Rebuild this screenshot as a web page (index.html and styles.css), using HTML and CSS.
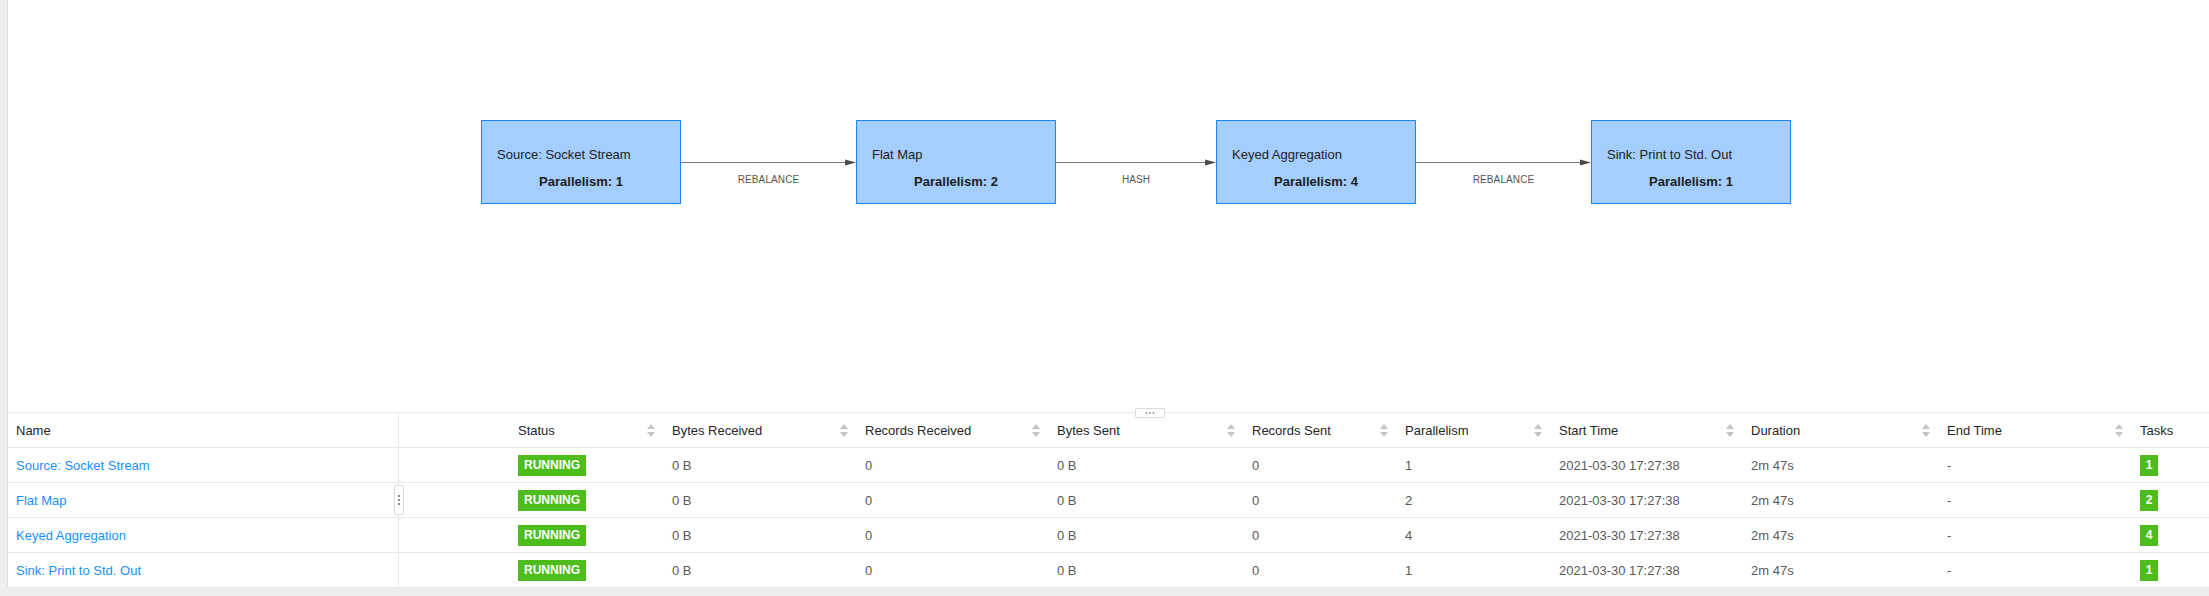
FILE: index.html
```html
<!DOCTYPE html>
<html lang="en">
<head>
<meta charset="utf-8">
<title>Job Overview</title>
<link rel="stylesheet" href="styles.css">
</head>
<body>
<div class="page">
  <div class="panel">
    <div class="graph">
      <svg class="dag" width="2201" height="412" viewBox="0 0 2201 412" xmlns="http://www.w3.org/2000/svg">
        <g class="edge">
          <line x1="673" y1="162.5" x2="838" y2="162.5"/>
          <polygon points="837,159.5 848,162.5 837,165.5"/>
          <text x="760.5" y="182.5" text-anchor="middle">REBALANCE</text>
        </g>
        <g class="edge">
          <line x1="1048" y1="162.5" x2="1198" y2="162.5"/>
          <polygon points="1197,159.5 1208,162.5 1197,165.5"/>
          <text x="1128" y="182.5" text-anchor="middle">HASH</text>
        </g>
        <g class="edge">
          <line x1="1408" y1="162.5" x2="1573" y2="162.5"/>
          <polygon points="1572,159.5 1583,162.5 1572,165.5"/>
          <text x="1495.5" y="182.5" text-anchor="middle">REBALANCE</text>
        </g>
        <g class="node">
          <rect x="473.5" y="120.5" width="199" height="83"/>
          <text class="node-name" x="489" y="159">Source: Socket Stream</text>
          <text class="node-par" x="573" y="185.5" text-anchor="middle">Parallelism: 1</text>
        </g>
        <g class="node">
          <rect x="848.5" y="120.5" width="199" height="83"/>
          <text class="node-name" x="864" y="159">Flat Map</text>
          <text class="node-par" x="948" y="185.5" text-anchor="middle">Parallelism: 2</text>
        </g>
        <g class="node">
          <rect x="1208.5" y="120.5" width="199" height="83"/>
          <text class="node-name" x="1224" y="159">Keyed Aggregation</text>
          <text class="node-par" x="1308" y="185.5" text-anchor="middle">Parallelism: 4</text>
        </g>
        <g class="node">
          <rect x="1583.5" y="120.5" width="199" height="83"/>
          <text class="node-name" x="1599" y="159">Sink: Print to Std. Out</text>
          <text class="node-par" x="1683" y="185.5" text-anchor="middle">Parallelism: 1</text>
        </g>
      </svg>
      <div class="h-handle">
        <svg width="28" height="8" viewBox="0 0 28 8"><circle cx="10.5" cy="4" r="0.85"/><circle cx="14" cy="4" r="0.85"/><circle cx="17.5" cy="4" r="0.85"/></svg>
      </div>
    </div>

    <table class="vertices">
      <thead>
        <tr>
          <th class="c-name">Name</th>
          <th class="c-status"><div class="th-in"><span>Status</span><i class="sorter"></i></div></th>
          <th class="c-br"><div class="th-in"><span>Bytes Received</span><i class="sorter"></i></div></th>
          <th class="c-rr"><div class="th-in"><span>Records Received</span><i class="sorter"></i></div></th>
          <th class="c-bs"><div class="th-in"><span>Bytes Sent</span><i class="sorter"></i></div></th>
          <th class="c-rs"><div class="th-in"><span>Records Sent</span><i class="sorter"></i></div></th>
          <th class="c-par"><div class="th-in"><span>Parallelism</span><i class="sorter"></i></div></th>
          <th class="c-st"><div class="th-in"><span>Start Time</span><i class="sorter"></i></div></th>
          <th class="c-dur"><div class="th-in"><span>Duration</span><i class="sorter"></i></div></th>
          <th class="c-et"><div class="th-in"><span>End Time</span><i class="sorter"></i></div></th>
          <th class="c-tasks">Tasks</th>
        </tr>
      </thead>
      <tbody>
        <tr>
          <td class="c-name"><a class="link">Source: Socket Stream</a></td>
          <td class="c-status"><span class="badge">RUNNING</span></td>
          <td>0 B</td><td>0</td><td>0 B</td><td>0</td><td>1</td>
          <td>2021-03-30 17:27:38</td><td>2m 47s</td><td>-</td>
          <td><span class="task">1</span></td>
        </tr>
        <tr>
          <td class="c-name"><a class="link">Flat Map</a></td>
          <td class="c-status"><span class="badge">RUNNING</span></td>
          <td>0 B</td><td>0</td><td>0 B</td><td>0</td><td>2</td>
          <td>2021-03-30 17:27:38</td><td>2m 47s</td><td>-</td>
          <td><span class="task">2</span></td>
        </tr>
        <tr>
          <td class="c-name"><a class="link">Keyed Aggregation</a></td>
          <td class="c-status"><span class="badge">RUNNING</span></td>
          <td>0 B</td><td>0</td><td>0 B</td><td>0</td><td>4</td>
          <td>2021-03-30 17:27:38</td><td>2m 47s</td><td>-</td>
          <td><span class="task">4</span></td>
        </tr>
        <tr>
          <td class="c-name"><a class="link">Sink: Print to Std. Out</a></td>
          <td class="c-status"><span class="badge">RUNNING</span></td>
          <td>0 B</td><td>0</td><td>0 B</td><td>0</td><td>1</td>
          <td>2021-03-30 17:27:38</td><td>2m 47s</td><td>-</td>
          <td><span class="task">1</span></td>
        </tr>
      </tbody>
    </table>

    <div class="v-handle">
      <svg width="8" height="28" viewBox="0 0 8 28"><circle cx="4" cy="10" r="0.9"/><circle cx="4" cy="14" r="0.9"/><circle cx="4" cy="18" r="0.9"/></svg>
    </div>
  </div>
</div>
</body>
</html>
```
FILE: styles.css
```css
html, body {
  margin: 0;
  padding: 0;
}
body {
  background: #eeeeee;
  font-family: "Liberation Sans", Arial, sans-serif;
  width: 2209px;
  height: 596px;
  overflow: hidden;
}
.page {
  display: flex;
  padding-left: 7px;
}
.panel {
  position: relative;
  flex: 1;
  background: #ffffff;
  border-left: 1px solid #e2e2e2;
}
.graph {
  position: relative;
  height: 412px;
  border-bottom: 1px solid #e8e8e8;
}
.dag {
  display: block;
}
.dag .node rect {
  fill: #a4cefd;
  stroke: #2182ff;
  stroke-width: 1;
}
.dag text {
  font-family: "Liberation Sans", Arial, sans-serif;
}
.dag .node-name {
  font-size: 13px;
  fill: #1f2124;
}
.dag .node-par {
  font-size: 13px;
  font-weight: bold;
  fill: #1b1d20;
}
.dag .edge line {
  stroke: #7a7a7a;
  stroke-width: 1;
}
.dag .edge polygon {
  fill: #4a4a4a;
}
.dag .edge text {
  font-size: 10px;
  fill: #555555;
  letter-spacing: 0.1px;
}
.h-handle {
  position: absolute;
  left: 1127px;
  bottom: -6px;
  width: 30px;
  height: 10px;
  box-sizing: border-box;
  border: 1px solid #dadada;
  border-radius: 2px;
  background: #ffffff;
  display: flex;
  align-items: center;
  justify-content: center;
}
.h-handle svg {
  fill: #666666;
  display: block;
}
.v-handle {
  position: absolute;
  left: 386px;
  top: 485px;
  width: 10px;
  height: 30px;
  box-sizing: border-box;
  border: 1px solid #dadada;
  border-radius: 2px;
  background: #ffffff;
  display: flex;
  align-items: center;
  justify-content: center;
}
.v-handle svg {
  fill: #555555;
  display: block;
}
.vertices {
  border-collapse: separate;
  border-spacing: 0;
  table-layout: fixed;
  width: 2201px;
  font-size: 13px;
}
.vertices th,
.vertices td {
  height: 34px;
  padding: 0 8px;
  border-bottom: 1px solid #e8e8e8;
  text-align: left;
  white-space: nowrap;
  overflow: hidden;
  box-sizing: content-box;
}
.vertices th {
  font-weight: normal;
  color: #262626;
}
.vertices td {
  color: #595959;
}
.vertices .c-name {
  width: 374px;
  border-right: 1px solid #e8e8e8;
}
.vertices .c-status {
  width: 138px;
  padding-left: 119px;
}
.vertices .c-br { width: 177px; }
.vertices .c-rr { width: 176px; }
.vertices .c-bs { width: 179px; }
.vertices .c-rs { width: 137px; }
.vertices .c-par { width: 138px; }
.vertices .c-st { width: 176px; }
.vertices .c-dur { width: 180px; }
.vertices .c-et { width: 177px; }
.vertices .c-tasks { width: 61px; }
.vertices th .th-in {
  display: flex;
  align-items: center;
  justify-content: space-between;
  margin-right: 1px;
}
.sorter {
  display: flex;
  flex-direction: column;
  gap: 3px;
  width: 8px;
}
.sorter::before,
.sorter::after {
  content: "";
  display: block;
  width: 0;
  height: 0;
  border-left: 4px solid transparent;
  border-right: 4px solid transparent;
}
.sorter::before {
  border-bottom: 5px solid #c4c4c4;
}
.sorter::after {
  border-top: 5px solid #c4c4c4;
}
.link {
  color: #1890ff;
  text-decoration: none;
  cursor: pointer;
}
.badge {
  display: inline-block;
  height: 21px;
  line-height: 21px;
  padding: 0 6px;
  background: #4dbd1b;
  color: #ffffff;
  font-weight: bold;
  font-size: 12px;
  vertical-align: middle;
}
.task {
  display: inline-block;
  width: 18px;
  height: 21px;
  line-height: 21px;
  text-align: center;
  background: #4dbd1b;
  color: #ffffff;
  font-weight: bold;
  font-size: 12px;
  vertical-align: middle;
}
```
